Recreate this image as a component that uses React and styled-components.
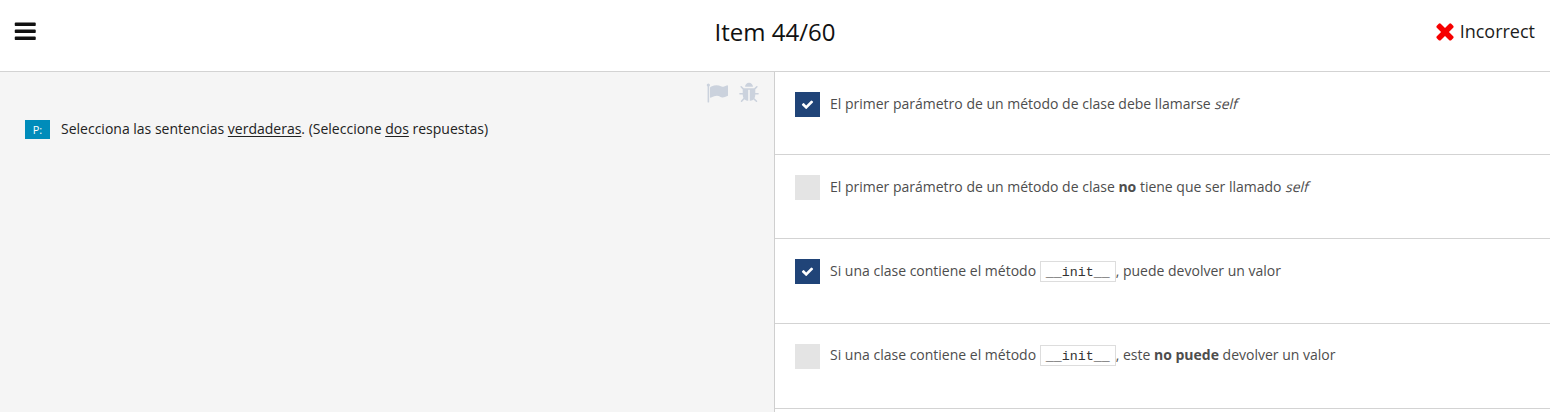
import React from "react";
import styled, { createGlobalStyle } from "styled-components";

const GlobalStyle = createGlobalStyle`
  * { box-sizing: border-box; }
  body {
    margin: 0;
    background: #fff;
    color: #1b1c20;
    font-family: "Open Sans", "Noto Sans", sans-serif;
    overflow: hidden;
  }
`;

const Page = styled.div`
  display: flex;
  flex-direction: column;
  height: 412px;
  overflow: hidden;
`;

const Header = styled.header`
  display: grid;
  grid-template-columns: 1fr auto 1fr;
  align-items: center;
  height: 72px;
  padding: 0 15px 8px;
  border-bottom: 1px solid #d3d3d3;
`;

const MenuButton = styled.button`
  display: flex;
  justify-self: start;
  margin-left: -2px;
  padding: 0;
  border: 0;
  background: none;
  color: #111;
`;

const Title = styled.h1`
  margin: 0;
  font-size: 24px;
  line-height: 32px;
  font-weight: 400;
  color: #111;
`;

const Result = styled.div`
  display: flex;
  align-items: center;
  justify-self: end;
  gap: 2px;
  margin-bottom: 2px;
  font-size: 18px;
  line-height: 26px;

  svg { color: #f60000; }
`;

const Main = styled.main`
  display: flex;
  flex: 1;
`;

const QuestionPane = styled.section`
  width: 775px;
  background: #f5f5f5;
  border-right: 1px solid #cfcfcf;
`;

const Tools = styled.div`
  display: flex;
  justify-content: flex-end;
  gap: 10px;
  padding: 10px 14px 0 0;
  height: 47px;
  color: #cbd2dd;
`;

const Question = styled.div`
  display: flex;
  align-items: flex-start;
  gap: 11px;
  padding-left: 25px;
`;

const Tag = styled.span`
  width: 25px;
  height: 19px;
  margin-top: 1px;
  background: #008cba;
  color: #fff;
  font-size: 11px;
  line-height: 20px;
  text-align: center;
`;

const QuestionText = styled.p`
  margin: 0;
  font-size: 14px;
  line-height: 20px;
  color: #222;

  u { text-underline-offset: 2px; }
`;

const Options = styled.section`
  flex: 1;
`;

const Option = styled.div`
  display: flex;
  align-items: flex-start;
  gap: 10px;
  height: ${(p) => p.$height}px;
  padding: 20px 20px 0;
  border-bottom: 1px solid #d3d3d3;
`;

const Checkbox = styled.span`
  display: flex;
  align-items: center;
  justify-content: center;
  width: 25px;
  height: 25px;
  background: ${(p) => (p.$checked ? "#204478" : "#e4e4e4")};
  color: #fff;
`;

const OptionText = styled.p`
  margin: ${(p) => p.$top}px 0 0;
  font-size: 14px;
  line-height: 22px;
  color: #4d4d4d;
`;

const Slanted = styled.em`
  display: inline-block;
  font-style: normal;
  transform: skewX(-14deg);
  transform-origin: 0 16px;
`;

const Code = styled.code`
  display: inline-block;
  height: 21px;
  padding: 0 5px;
  border: 1px solid #ddd;
  color: #333;
  font-family: "Liberation Mono", monospace;
  font-size: 13.33px;
  line-height: 22px;
`;

const paths = {
  bars: "M1664 1344v128q0 26-19 45t-45 19h-1408q-26 0-45-19t-19-45v-128q0-26 19-45t45-19h1408q26 0 45 19t19 45zm0-512v128q0 26-19 45t-45 19h-1408q-26 0-45-19t-19-45v-128q0-26 19-45t45-19h1408q26 0 45 19t19 45zm0-512v128q0 26-19 45t-45 19h-1408q-26 0-45-19t-19-45v-128q0-26 19-45t45-19h1408q26 0 45 19t19 45z",
  times: "M1490 1322q0 40-28 68l-136 136q-28 28-68 28t-68-28l-294-294-294 294q-28 28-68 28t-68-28l-136-136q-28-28-28-68t28-68l294-294-294-294q-28-28-28-68t28-68l136-136q28-28 68-28t68 28l294 294 294-294q28-28 68-28t68 28l136 136q28 28 28 68t-28 68l-294 294 294 294q28 28 28 68z",
  check: "M1671 566q0 40-28 68l-724 724-136 136q-28 28-68 28t-68-28l-136-136-362-362q-28-28-28-68t28-68l136-136q28-28 68-28t68 28l294 295 656-657q28-28 68-28t68 28l136 136q28 28 28 68z",
  flag: "M320 256q0 72-64 110v1266q0 13-9.5 22.5t-22.5 9.5h-64q-13 0-22.5-9.5t-9.5-22.5v-1266q-64-38-64-110 0-53 37.5-90.5t90.5-37.5 90.5 37.5 37.5 90.5zm1472 64v763q0 25-12.5 38.5t-39.5 27.5q-215 116-369 116-61 0-123.5-22t-108.5-48-115.5-48-142.5-22q-192 0-464 146-17 9-33 9-26 0-45-19t-19-45v-742q0-32 31-55 21-14 79-43 236-120 421-120 107 0 200 29t219 88q38 19 88 19 54 0 117.5-21t110-47 88-47 54.5-21q26 0 45 19t19 45z",
  bug: "M1696 960q0 26-19 45t-45 19h-224q0 171-67 290l208 209q19 19 19 45t-19 45q-18 19-45 19t-45-19l-198-197q-5 5-15 13t-42 28.5-65 36.5-82 29-97 13v-896h-128v896q-51 0-101.5-13.5t-87-33-66-39-43.5-32.5l-15-14-183 207q-20 21-48 21-24 0-43-16-19-18-20.5-44.5t15.5-46.5l202-227q-58-114-58-274h-224q-26 0-45-19t-19-45 19-45 45-19h224v-294l-173-173q-19-19-19-45t19-45 45-19 45 19l173 173h844l173-173q19-19 45-19t45 19 19 45-19 45l-173 173v294h224q26 0 45 19t19 45zm-480-576h-640q0-133 93.5-226.5t226.5-93.5 226.5 93.5 93.5 226.5z",
};

function Icon({ name, size }) {
  return (
    <svg width={size} height={size} viewBox="0 0 1792 1792" fill="currentColor" aria-hidden="true">
      <path d={paths[name]} />
    </svg>
  );
}

const options = [
  { checked: true, height: 83, top: 1, text: <>El primer parámetro de un método de clase debe llamarse <Slanted>self</Slanted></> },
  { checked: false, height: 84, top: 1, text: <>El primer parámetro de un método de clase <b>no</b> tiene que ser llamado <Slanted>self</Slanted></> },
  { checked: true, height: 85, top: 1, text: <>Si una clase contiene el método <Code>__init__</Code>, puede devolver un valor</> },
  { checked: false, height: 85, top: 0, text: <>Si una clase contiene el método <Code>__init__</Code>, este <b>no puede</b> devolver un valor</> },
];

export default function App() {
  return (
    <Page>
      <GlobalStyle />
      <Header>
        <MenuButton aria-label="Menu"><Icon name="bars" size={24.5} /></MenuButton>
        <Title>Item 44/60</Title>
        <Result><Icon name="times" size={26} />Incorrect</Result>
      </Header>
      <Main>
        <QuestionPane>
          <Tools>
            <Icon name="flag" size={22} />
            <Icon name="bug" size={22} />
          </Tools>
          <Question>
            <Tag>P:</Tag>
            <QuestionText>
              Selecciona las sentencias <u>verdaderas</u>. (Seleccione <u>dos</u> respuestas)
            </QuestionText>
          </Question>
        </QuestionPane>
        <Options>
          {options.map((o, i) => (
            <Option key={i} $height={o.height}>
              <Checkbox $checked={o.checked}>{o.checked && <Icon name="check" size={13} />}</Checkbox>
              <OptionText $top={o.top}>{o.text}</OptionText>
            </Option>
          ))}
        </Options>
      </Main>
    </Page>
  );
}
